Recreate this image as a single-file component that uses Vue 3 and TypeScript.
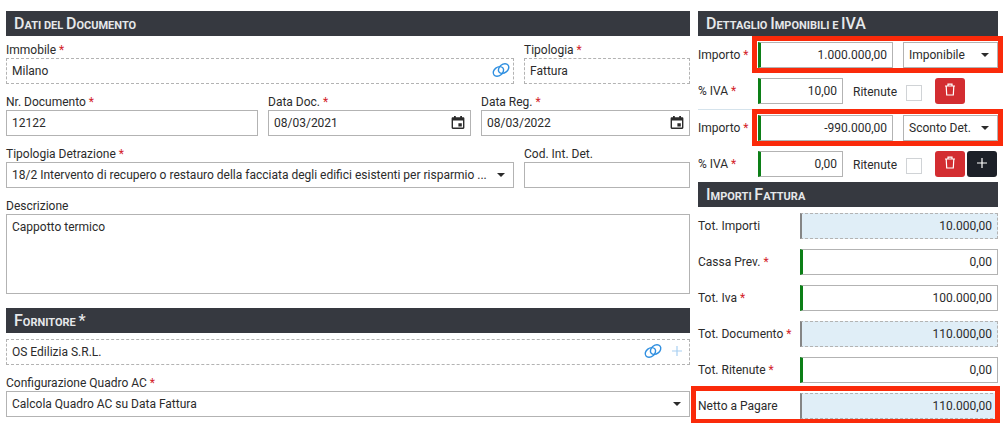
<script setup lang="ts">
import { ref } from 'vue'

interface TaxLine {
  id: number
  amount: string
  kind: string
  rate: string
  withheld: boolean
}

interface Total {
  id: string
  label: string
  value: string
  required: boolean
  readonly: boolean
  marked: boolean
}

const kinds = ['Imponibile', 'Sconto Det.']

const lines = ref<TaxLine[]>([
  { id: 1, amount: '1.000.000,00', kind: 'Imponibile', rate: '10,00', withheld: false },
  { id: 2, amount: '-990.000,00', kind: 'Sconto Det.', rate: '0,00', withheld: false },
])

const totals = ref<Total[]>([
  { id: 'importi', label: 'Tot. Importi', value: '10.000,00', required: false, readonly: true, marked: false },
  { id: 'cassa', label: 'Cassa Prev.', value: '0,00', required: true, readonly: false, marked: false },
  { id: 'iva', label: 'Tot. Iva', value: '100.000,00', required: true, readonly: false, marked: false },
  { id: 'documento', label: 'Tot. Documento', value: '110.000,00', required: true, readonly: true, marked: false },
  { id: 'ritenute', label: 'Tot. Ritenute', value: '0,00', required: true, readonly: false, marked: false },
  { id: 'netto', label: 'Netto a Pagare', value: '110.000,00', required: false, readonly: true, marked: true },
])

const immobile = ref('Milano')
const tipologia = ref('Fattura')
const numero = ref('12122')
const dataDoc = ref('08/03/2021')
const dataReg = ref('08/03/2022')
const codice = ref('')
const descrizione = ref('Cappotto termico')
const fornitore = ref('OS Edilizia S.R.L.')

// Splits a heading into capital and lower-case runs; the latter are set as small capitals.
function capRuns(title: string) {
  return (title.match(/[a-z ]+|[^a-z ]+/g) ?? []).map((text) => ({ text, small: /[a-z ]/.test(text) }))
}

const titles = {
  document: capRuns('Dati del Documento'),
  supplier: capRuns('Fornitore *'),
  taxes: capRuns('Dettaglio Imponibili e IVA'),
  totals: capRuns('Importi Fattura'),
}

function addLine() {
  lines.value.push({ id: Date.now(), amount: '0,00', kind: 'Imponibile', rate: '0,00', withheld: false })
}

function removeLine(id: number) {
  lines.value = lines.value.filter((line) => line.id !== id)
}
</script>

<template>
  <main class="page">
    <div class="column">
      <section>
        <h2 class="bar"><span v-for="(run, i) in titles.document" :key="i" :class="{ small: run.small }">{{ run.text }}</span></h2>
        <div class="fields">
          <div class="row wide-narrow">
            <div class="field">
              <label for="immobile">Immobile <span class="req">*</span></label>
              <div class="control dashed">
                <input id="immobile" v-model="immobile" readonly />
                <button class="icon-button" type="button" aria-label="Collega immobile">
                  <svg class="link" viewBox="0 0 18 16"><ellipse cx="6.4" cy="9.4" rx="5.7" ry="4.2" transform="rotate(-38 6.4 9.4)" /><ellipse cx="11.6" cy="6.6" rx="5.7" ry="4.2" transform="rotate(-38 11.6 6.6)" /></svg>
                </button>
              </div>
            </div>
            <div class="field">
              <label for="tipologia">Tipologia <span class="req">*</span></label>
              <div class="control dashed"><input id="tipologia" v-model="tipologia" readonly /></div>
            </div>
          </div>

          <div class="row thirds">
            <div class="field">
              <label for="numero">Nr. Documento <span class="req">*</span></label>
              <div class="control"><input id="numero" v-model="numero" /></div>
            </div>
            <div class="field">
              <label for="data-doc">Data Doc. <span class="req">*</span></label>
              <div class="control">
                <input id="data-doc" v-model="dataDoc" />
                <button class="icon-button" type="button" aria-label="Scegli data documento">
                  <svg class="calendar" viewBox="0 0 14 14"><path fill-rule="evenodd" d="M3 0h1.8v1.2h4.4V0H11v1.2h1.2c.7 0 1.2.5 1.2 1.2v9.2c0 .7-.5 1.3-1.2 1.3H1.8c-.7 0-1.2-.6-1.2-1.3V2.4c0-.7.5-1.2 1.2-1.2H3zM2 4.4v7.1h10V4.4zM7.4 7.2h3.4v3.3H7.4z" /></svg>
                </button>
              </div>
            </div>
            <div class="field">
              <label for="data-reg">Data Reg. <span class="req">*</span></label>
              <div class="control">
                <input id="data-reg" v-model="dataReg" />
                <button class="icon-button" type="button" aria-label="Scegli data registrazione">
                  <svg class="calendar" viewBox="0 0 14 14"><path fill-rule="evenodd" d="M3 0h1.8v1.2h4.4V0H11v1.2h1.2c.7 0 1.2.5 1.2 1.2v9.2c0 .7-.5 1.3-1.2 1.3H1.8c-.7 0-1.2-.6-1.2-1.3V2.4c0-.7.5-1.2 1.2-1.2H3zM2 4.4v7.1h10V4.4zM7.4 7.2h3.4v3.3H7.4z" /></svg>
                </button>
              </div>
            </div>
          </div>

          <div class="row wide-narrow">
            <div class="field">
              <label for="detrazione">Tipologia Detrazione <span class="req">*</span></label>
              <div class="control select">
                <select id="detrazione">
                  <option>18/2 Intervento di recupero o restauro della facciata degli edifici esistenti per risparmio ...</option>
                </select>
              </div>
            </div>
            <div class="field">
              <label for="codice">Cod. Int. Det.</label>
              <div class="control"><input id="codice" v-model="codice" /></div>
            </div>
          </div>

          <div class="field">
            <label for="descrizione">Descrizione</label>
            <textarea id="descrizione" v-model="descrizione"></textarea>
          </div>
        </div>
      </section>

      <section>
        <h2 class="bar"><span v-for="(run, i) in titles.supplier" :key="i" :class="{ small: run.small }">{{ run.text }}</span></h2>
        <div class="fields">
          <div class="control dashed">
            <input v-model="fornitore" aria-label="Fornitore" readonly />
            <button class="icon-button" type="button" aria-label="Collega fornitore">
              <svg class="link" viewBox="0 0 18 16"><ellipse cx="6.4" cy="9.4" rx="5.7" ry="4.2" transform="rotate(-38 6.4 9.4)" /><ellipse cx="11.6" cy="6.6" rx="5.7" ry="4.2" transform="rotate(-38 11.6 6.6)" /></svg>
            </button>
            <button class="icon-button" type="button" aria-label="Aggiungi fornitore">
              <svg class="plus-light" viewBox="0 0 12 12"><path d="M6 1v10M1 6h10" /></svg>
            </button>
          </div>
          <div class="field">
            <label for="quadro">Configurazione Quadro AC <span class="req">*</span></label>
            <div class="control select">
              <select id="quadro">
                <option>Calcola Quadro AC su Data Fattura</option>
              </select>
            </div>
          </div>
        </div>
      </section>
    </div>

    <div class="side">
      <section>
        <h2 class="bar"><span v-for="(run, i) in titles.taxes" :key="i" :class="{ small: run.small }">{{ run.text }}</span></h2>
        <div v-for="(line, index) in lines" :key="line.id" class="tax-line">
          <div class="tax-row">
            <label :for="`importo-${line.id}`">Importo <span class="req">*</span></label>
            <div class="amount marked">
              <div class="control number"><input :id="`importo-${line.id}`" v-model="line.amount" /></div>
              <div class="control select">
                <select v-model="line.kind" aria-label="Tipo importo">
                  <option v-for="kind in kinds" :key="kind">{{ kind }}</option>
                </select>
              </div>
            </div>
          </div>
          <div class="tax-row">
            <label :for="`iva-${line.id}`">% IVA <span class="req">*</span></label>
            <div class="rate">
              <div class="control number"><input :id="`iva-${line.id}`" v-model="line.rate" /></div>
              <label class="withheld">Ritenute <input v-model="line.withheld" type="checkbox" /></label>
              <div class="actions">
                <button class="square delete" type="button" aria-label="Elimina riga" @click="removeLine(line.id)">
                  <svg viewBox="0 0 12 14"><path d="M1 3h10M4 3V1.2h4V3M2.2 3l.5 9h6.6l.5-9" /></svg>
                </button>
                <button v-if="index === lines.length - 1" class="square add" type="button" aria-label="Aggiungi riga" @click="addLine">
                  <svg viewBox="0 0 12 14"><path d="M6 2v10M1 7h10" /></svg>
                </button>
              </div>
            </div>
          </div>
        </div>
      </section>

      <section>
        <h2 class="bar"><span v-for="(run, i) in titles.totals" :key="i" :class="{ small: run.small }">{{ run.text }}</span></h2>
        <div class="totals">
          <div v-for="total in totals" :key="total.id" class="total" :class="{ marked: total.marked }">
            <label :for="total.id">{{ total.label }} <span v-if="total.required" class="req">*</span></label>
            <div class="control number" :class="{ dashed: total.readonly }">
              <input :id="total.id" v-model="total.value" :readonly="total.readonly" />
            </div>
          </div>
        </div>
      </section>
    </div>
  </main>
</template>

<style>
body {
  margin: 0;
  background: #fff;
}
</style>

<style scoped>
* {
  box-sizing: border-box;
}

.page {
  display: grid;
  grid-template-columns: minmax(0, 1fr) 300px;
  align-items: start;
  gap: 8px;
  padding: 11px 6px 4px;
  color: #2b2b2b;
  font: 12px/16px Roboto, "Liberation Sans", sans-serif;
}

.column {
  display: grid;
  gap: 14px;
}

.bar {
  height: 25px;
  margin: 0;
  padding: 0 8px;
  background: #363940;
  color: #e6e8ea;
  font-size: 16px;
  font-weight: 500;
  line-height: 25px;
  white-space: pre;
}

.small {
  font-size: 11px;
  font-weight: 700;
  text-transform: uppercase;
}

.fields {
  display: grid;
  gap: 10px;
  padding-top: 6px;
}

.row {
  display: grid;
  gap: 10px;
}

.wide-narrow {
  grid-template-columns: minmax(0, 508fr) minmax(0, 166fr);
}

.thirds {
  grid-template-columns: minmax(0, 252fr) minmax(0, 203fr) minmax(0, 209fr);
}

label {
  display: block;
  white-space: nowrap;
}

.req {
  color: #d3222a;
}

.control {
  display: flex;
  align-items: center;
  height: 26px;
  min-width: 0;
  border: 1px solid #b3b3b3;
  background: #fff;
}

.dashed {
  border-style: dashed;
}

.control input,
.control select,
textarea {
  flex: 1;
  width: 100%;
  min-width: 0;
  margin: 0;
  border: 0;
  outline: 0;
  background: transparent;
  color: inherit;
  font: inherit;
}

.control input {
  padding: 0 5px;
}

.control select {
  height: 24px;
  padding: 0 26px 0 5px;
  appearance: none;
  text-overflow: ellipsis;
}

.select {
  position: relative;
}

.select::after {
  content: "";
  position: absolute;
  top: 10px;
  right: 8px;
  border: 4px solid transparent;
  border-top-color: #2b2b2b;
  border-bottom: 0;
  pointer-events: none;
}

textarea {
  display: block;
  height: 80px;
  padding: 4px 5px;
  border: 1px solid #b3b3b3;
  resize: none;
}

.icon-button {
  display: flex;
  align-items: center;
  justify-content: center;
  width: 24px;
  height: 24px;
  padding: 0;
  border: 0;
  background: none;
}

.dashed .icon-button {
  padding-bottom: 2px;
}

.link {
  width: 18px;
  height: 16px;
  fill: none;
  stroke: #2f8fe0;
  stroke-width: 1.4;
}

.plus-light {
  width: 12px;
  height: 12px;
  stroke: #a9d0f2;
  stroke-width: 1.2;
}

.calendar {
  width: 14px;
  height: 14px;
  fill: #2b2b2b;
}

.number {
  border-left: 3px solid #0c7f17;
}

.number input {
  text-align: right;
}

.number.dashed {
  border-left: 2px solid #858585;
  background: #e0eef7;
}

.tax-line {
  display: grid;
  gap: 10px;
  padding: 6px 0 5px;
}

.tax-line + .tax-line {
  padding-top: 5px;
  border-top: 1px solid #d5e3ec;
}

.tax-row {
  display: grid;
  grid-template-columns: 60px minmax(0, 1fr);
  align-items: center;
}

.amount {
  display: grid;
  grid-template-columns: minmax(0, 135fr) minmax(0, 95fr);
  gap: 10px;
}

.marked {
  position: relative;
}

.marked::after {
  content: "";
  position: absolute;
  inset: -6px -5px -5px -6px;
  border: 5px solid #fa2a0a;
  pointer-events: none;
}

.rate {
  display: grid;
  grid-template-columns: 85px 72px 63px;
  gap: 10px;
  align-items: center;
}

.withheld {
  display: flex;
  align-items: center;
  justify-content: space-between;
  padding: 2px 3px 0 0;
}

.withheld input {
  width: 16px;
  height: 16px;
  margin: 1px 0 0;
  border: 1px solid #d0d3d6;
  background: #fff;
  appearance: none;
}

.withheld input:checked {
  background: #3a94e0;
}

.actions {
  display: flex;
  gap: 2px;
}

.square {
  display: flex;
  align-items: center;
  justify-content: center;
  width: 30px;
  height: 26px;
  padding: 0 0 2px;
  border: 0;
  border-radius: 3px;
}

.square svg {
  width: 12px;
  height: 14px;
  fill: none;
  stroke: #fff;
  stroke-width: 1.2;
}

.delete {
  background: #d32d31;
}

.add {
  background: #1c2028;
}

.totals {
  display: grid;
  gap: 10px;
  padding-top: 6px;
}

.total {
  display: grid;
  grid-template-columns: 102px minmax(0, 1fr);
  align-items: center;
}

.total.marked::after {
  inset: -7px -2px -5px -7px;
}
</style>
